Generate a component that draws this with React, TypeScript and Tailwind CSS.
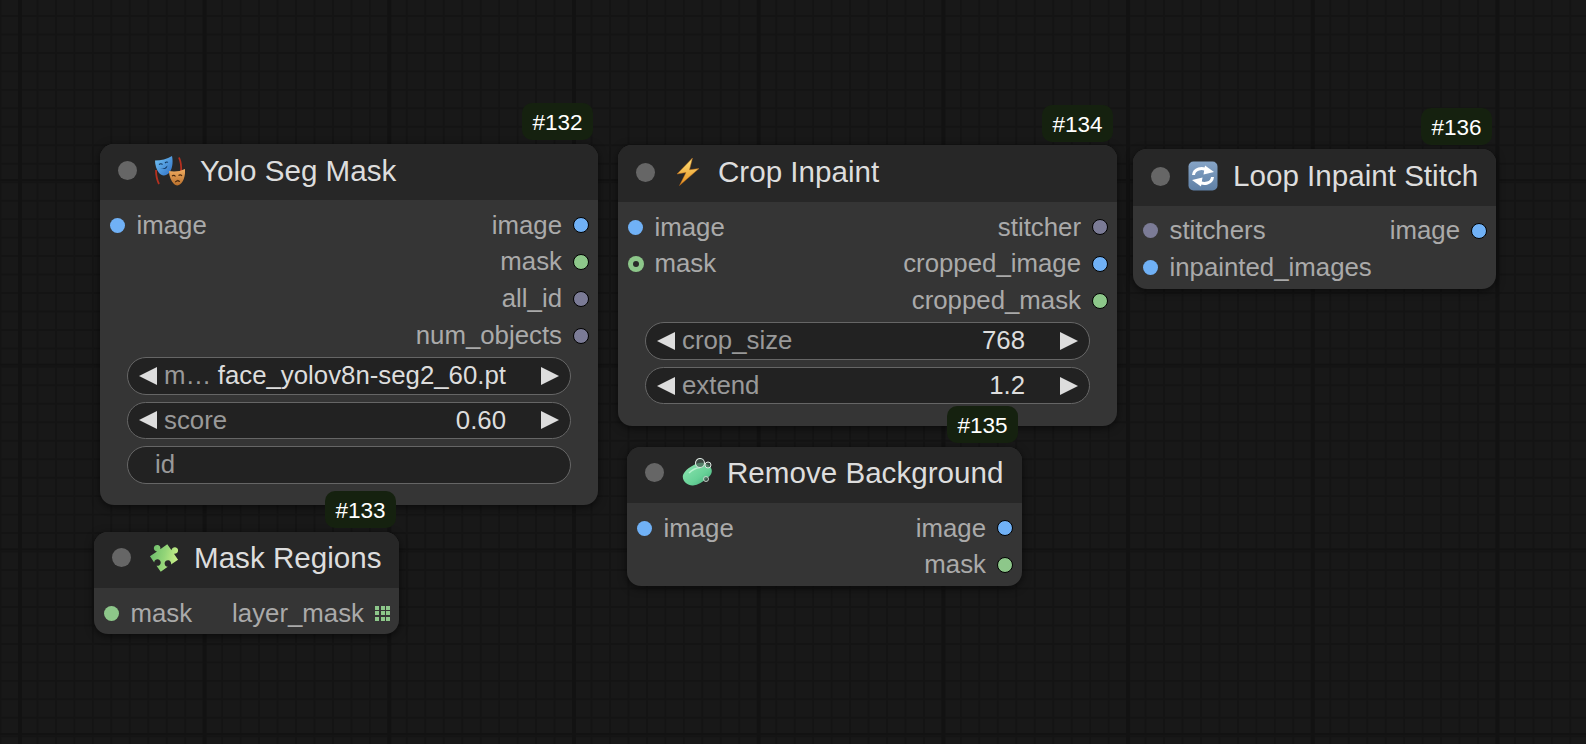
import React from "react";

const BLUE = "bg-[#70b1f6]";
const GREEN = "bg-[#8dc78a]";
const GRAY = "bg-[#7b7b96]";

function Masks() {
  return (
    <svg viewBox="0 0 30 30" className="w-[30px] h-[30px]">
      <defs>
        <linearGradient id="mb" x1="0" y1="0" x2="1" y2="1">
          <stop offset="0" stopColor="#74c6f7" />
          <stop offset="1" stopColor="#2f6fc4" />
        </linearGradient>
        <linearGradient id="mo" x1="0" y1="0" x2="0" y2="1">
          <stop offset="0" stopColor="#f0ad62" />
          <stop offset="1" stopColor="#b9702c" />
        </linearGradient>
      </defs>
      <path d="M1 14 C1 19 2 24 4 28" stroke="#b5301f" strokeWidth="1.800" fill="none" />
      <path d="M24 1.500 C26 6 26.500 11 26 16" stroke="#b5301f" strokeWidth="1.800" fill="none" />
      <path d="M0 4.500 C6 4.500 12 3 17 0 C18.500 7 17 14 14 17 C11 20 7 20.500 4 17 C1.500 13.500 0 9 0 4.500 Z" fill="url(#mb)" />
      <path d="M4 8.500 q2 -1.500 3.500 0 M10 7 q1.600 -1.600 3 -.6" stroke="#10365f" strokeWidth="1.100" fill="none" />
      <path d="M5.500 12 q4 1.500 7 -2.500 q-1 5.500 -7 2.500 Z" fill="#10365f" />
      <path d="M14 15 C19 16 25 15.500 30 13 C30.500 19 29 24 26.500 27 C24 30 21 30 19 28 C16 25 14 20 14 15 Z" fill="url(#mo)" />
      <path d="M17 20 q2 -1.500 3.500 .5 M23.500 19.500 q2 -1.500 3.500 .5" stroke="#4a2a10" strokeWidth="1.100" fill="none" />
      <path d="M20 26 q2.500 -3 5 -.5 q-2.500 -1 -5 .5 Z" fill="#4a2a10" stroke="#4a2a10" strokeWidth=".7" />
    </svg>
  );
}

function Bolt() {
  return (
    <svg viewBox="0 0 30 30" className="w-[30px] h-[30px]">
      <defs>
        <linearGradient id="bg" x1="0" y1="0" x2="0" y2="1">
          <stop offset="0" stopColor="#ffe27a" />
          <stop offset="1" stopColor="#e8901e" />
        </linearGradient>
      </defs>
      <path d="M19.500 1 L4 17 L13 15.500 L6.500 28.500 L26 11.500 L16.500 12.800 Z" fill="url(#bg)" stroke="#b5661b" strokeWidth=".5" />
    </svg>
  );
}

function Soap() {
  return (
    <svg viewBox="0 0 30 30" className="w-[30px] h-[30px]">
      <defs>
        <linearGradient id="sg" x1="0" y1="0" x2="1" y2="1">
          <stop offset="0" stopColor="#8fe7b2" />
          <stop offset=".6" stopColor="#67d197" />
          <stop offset="1" stopColor="#3fa878" />
        </linearGradient>
      </defs>
      <path d="M1 17 C3 12 9 8 15 5.500 C20 3.500 27 6 29 10 C31 14 29 17 26 19.500 C21 24 16 27 11 27.500 C6 28 -0.500 23 1 17 Z" fill="url(#sg)" />
      <path d="M7 15 C10 12 14 10 18 9.500" stroke="#b7f2cf" strokeWidth="1.500" fill="none" />
      <circle cx="18" cy="5" r="4.500" fill="#44584e" fillOpacity=".7" stroke="#dfe8e3" strokeWidth="1.100" />
      <circle cx="26" cy="7" r="3" fill="#44584e" fillOpacity=".7" stroke="#dfe8e3" strokeWidth="1" />
      <circle cx="24" cy="21" r="2.500" fill="#44584e" fillOpacity=".7" stroke="#cfdcd5" strokeWidth=".9" />
    </svg>
  );
}

function Refresh() {
  return (
    <svg viewBox="0 0 30 30" className="w-[30px] h-[30px]">
      <defs>
        <linearGradient id="rg" x1="0" y1="0" x2="0" y2="1">
          <stop offset="0" stopColor="#86a4c6" />
          <stop offset="1" stopColor="#5f80a6" />
        </linearGradient>
      </defs>
      <rect x=".5" y=".5" width="29" height="29" rx="5" fill="url(#rg)" />
      <path d="M5.500 14 C6 8 14 5.500 19.500 9.500" stroke="#fff" strokeWidth="3" fill="none" />
      <path d="M17 4.500 L26 11 L15.500 13.500 Z" fill="#fff" />
      <path d="M24.500 16 C24 22 16 24.500 10.500 20.500" stroke="#fff" strokeWidth="3" fill="none" />
      <path d="M13 25.500 L4 19 L14.500 16.500 Z" fill="#fff" />
    </svg>
  );
}

function Puzzle() {
  return (
    <svg viewBox="0 0 30 30" className="w-[32px] h-[32px] shrink-0">
      <defs>
        <linearGradient id="pg" x1="0" y1="0" x2="1" y2="1">
          <stop offset="0" stopColor="#63b868" />
          <stop offset=".5" stopColor="#93d578" />
          <stop offset="1" stopColor="#dcf88f" />
        </linearGradient>
      </defs>
      <g transform="rotate(-35 15 15) translate(15 15) scale(1.1) translate(-15 -15)">
        <path
          d="M6 7 h7.300 a2.800 2.800 0 1 1 3.400 0 h7.300 v6.300 a2.800 2.800 0 1 1 0 3.400 v6.300 h-7.300 a2.800 2.800 0 1 0 -3.400 0 h-7.300 v-6.300 a2.800 2.800 0 1 0 0 -3.400 z"
          fill="url(#pg)"
        />
      </g>
    </svg>
  );
}

function Dot({ color, ring, hollow }: { color: string; ring?: boolean; hollow?: boolean }) {
  if (hollow) {
    return (
      <span className={`${color} w-[16px] h-[16px] mx-[-0.5px] rounded-full flex items-center justify-center shrink-0`}>
        <span className="w-[6px] h-[6px] rounded-full bg-[#2a2a2a]" />
      </span>
    );
  }
  return (
    <span
      className={`${color} ${ring ? "w-[16px] h-[16px] border-[1.5px] border-black" : "w-[15px] h-[15px]"} rounded-full shrink-0`}
    />
  );
}

function GridDot() {
  return (
    <span className="grid grid-cols-3 gap-[1.5px] w-[15px] h-[15px] shrink-0">
      {Array.from({ length: 9 }).map((_, i) => (
        <span key={i} className="bg-[#8dc78a]" />
      ))}
    </span>
  );
}

function Arrow({ right }: { right?: boolean }) {
  return (
    <svg viewBox="0 0 18 18" className="w-[18px] h-[18px] shrink-0">
      <path d={right ? "M0 0 L18 9 L0 18 Z" : "M18 0 L0 9 L18 18 Z"} fill="#dddddd" />
    </svg>
  );
}

function Slot({ left, right }: { left?: React.ReactNode; right?: React.ReactNode }) {
  return (
    <div className="h-[36.800px] flex items-center justify-between">
      <div className="flex items-center">{left}</div>
      <div className="flex items-center">{right}</div>
    </div>
  );
}

function In({ label, dot }: { label: string; dot: React.ReactNode }) {
  return (
    <>
      <span className="w-[10px]" />
      {dot}
      <span className="ml-[11.500px] text-[#aaaaaa]">{label}</span>
    </>
  );
}

function Out({ label, dot }: { label: string; dot: React.ReactNode }) {
  return (
    <>
      <span className="mr-[11px] text-[#aaaaaa]">{label}</span>
      {dot}
      <span className="w-[9px]" />
    </>
  );
}

function Combo({ label, value, end }: { label: string; value: string; end: string }) {
  return (
    <div className="h-[37.500px] rounded-full bg-[#222222] border-[1.5px] border-[#666666] flex items-center px-[11px]">
      <Arrow />
      <span className="ml-[7px] text-[#999999] whitespace-nowrap">{label}</span>
      <span className={`flex-1 text-right text-[#dddddd] whitespace-nowrap ${end}`}>{value}</span>
      <Arrow right />
    </div>
  );
}

function Node({
  title,
  icon,
  id,
  className,
  titleH,
  badge,
  children,
}: {
  title: string;
  icon: React.ReactNode;
  id: string;
  className: string;
  titleH: string;
  badge: string;
  children: React.ReactNode;
}) {
  return (
    <div
      className={`absolute rounded-[14px] bg-[#353535] shadow-[0_2px_8px_rgba(0,0,0,0.6)] text-[25.800px] leading-none ${className}`}
    >
      <div
        className={`${titleH} rounded-t-[14px] bg-[#272727] flex items-center text-[29.600px] text-[#dddddd] whitespace-nowrap`}
      >
        <span className="ml-[18px] w-[19px] h-[19px] rounded-full bg-[#666666] shrink-0" />
        <span className="ml-[18px] w-[30px] h-[30px] flex items-center justify-center shrink-0">{icon}</span>
        <span className="ml-[15px]">{title}</span>
      </div>
      {children}
      <div
        className={`absolute ${badge} h-[37px] w-[71px] rounded-[10px] bg-[#15210f] text-white text-[22.500px] flex items-center justify-center pt-[4px]`}
      >
        #{id}
      </div>
    </div>
  );
}

export default function App() {
  return (
    <div
      className="relative w-[1586px] h-[744px] overflow-hidden bg-[#181818] bg-[linear-gradient(to_right,#121212_4px,transparent_4px),linear-gradient(to_bottom,#121212_2px,transparent_2px),linear-gradient(to_right,#141414_1.500px,transparent_1.500px),linear-gradient(to_bottom,#141414_1.500px,transparent_1.500px)] bg-[size:184.700px_184.700px,184.700px_184.700px,18.470px_18.470px,18.470px_18.470px] bg-[position:18px_0,0_179px,18px_0,0_15px]"
      style={{ fontFamily: '"Liberation Sans", Arial, sans-serif' }}
    >
      <Node
        title="Yolo Seg Mask"
        icon={<Masks />}
        id="132"
        className="left-[100px] top-[144px] w-[498px] h-[361px]"
        titleH="h-[56px] pb-[3px]"
        badge="right-[5px] top-[-41px]"
      >
        <div className="pt-[7px]">
          <Slot left={<In label="image" dot={<Dot color={BLUE} />} />} right={<Out label="image" dot={<Dot color={BLUE} ring />} />} />
          <Slot right={<Out label="mask" dot={<Dot color={GREEN} ring />} />} />
          <Slot right={<Out label="all_id" dot={<Dot color={GRAY} ring />} />} />
          <Slot right={<Out label="num_objects" dot={<Dot color={GRAY} ring />} />} />
        </div>
        <div className="mx-[27px] mt-[3px] flex flex-col gap-[7px]">
          <Combo label="m…" value="face_yolov8n-seg2_60.pt" end="mr-[35px]" />
          <Combo label="score" value="0.60" end="mr-[35px]" />
          <div className="h-[37.500px] rounded-full bg-[#222222] border-[1.5px] border-[#666666] flex items-center pl-[27px] text-[#999999]">
            id
          </div>
        </div>
      </Node>

      <Node
        title="Mask Regions"
        icon={<Puzzle />}
        id="133"
        className="left-[94px] top-[532px] w-[305px] h-[102px]"
        titleH="h-[56px] pb-[5px]"
        badge="right-[3px] top-[-41px]"
      >
        <div className="pt-[7px]">
          <Slot left={<In label="mask" dot={<Dot color={GREEN} />} />} right={<Out label="layer_mask" dot={<GridDot />} />} />
        </div>
      </Node>

      <Node
        title="Crop Inpaint"
        icon={<Bolt />}
        id="134"
        className="left-[618px] top-[145px] w-[499px] h-[281px]"
        titleH="h-[57px] pb-[3px]"
        badge="right-[4px] top-[-40px]"
      >
        <div className="pt-[7px]">
          <Slot left={<In label="image" dot={<Dot color={BLUE} />} />} right={<Out label="stitcher" dot={<Dot color={GRAY} ring />} />} />
          <Slot left={<In label="mask" dot={<Dot color={GREEN} hollow />} />} right={<Out label="cropped_image" dot={<Dot color={BLUE} ring />} />} />
          <Slot right={<Out label="cropped_mask" dot={<Dot color={GREEN} ring />} />} />
        </div>
        <div className="mx-[27px] mt-[3px] flex flex-col gap-[7px]">
          <Combo label="crop_size" value="768" end="mr-[35px]" />
          <Combo label="extend" value="1.2" end="mr-[35px]" />
        </div>
      </Node>

      <Node
        title="Remove Background"
        icon={<Soap />}
        id="135"
        className="left-[627px] top-[447px] w-[395px] h-[139px]"
        titleH="h-[56px] pb-[5px]"
        badge="right-[4px] top-[-41px]"
      >
        <div className="pt-[7px]">
          <Slot left={<In label="image" dot={<Dot color={BLUE} />} />} right={<Out label="image" dot={<Dot color={BLUE} ring />} />} />
          <Slot right={<Out label="mask" dot={<Dot color={GREEN} ring />} />} />
        </div>
      </Node>

      <Node
        title="Loop Inpaint Stitch"
        icon={<Refresh />}
        id="136"
        className="left-[1133px] top-[149px] w-[363px] h-[140px]"
        titleH="h-[57px] pb-[3px]"
        badge="right-[4px] top-[-41px]"
      >
        <div className="pt-[6.500px]">
          <Slot left={<In label="stitchers" dot={<Dot color={GRAY} />} />} right={<Out label="image" dot={<Dot color={BLUE} ring />} />} />
          <Slot left={<In label="inpainted_images" dot={<Dot color={BLUE} />} />} />
        </div>
      </Node>
    </div>
  );
}
